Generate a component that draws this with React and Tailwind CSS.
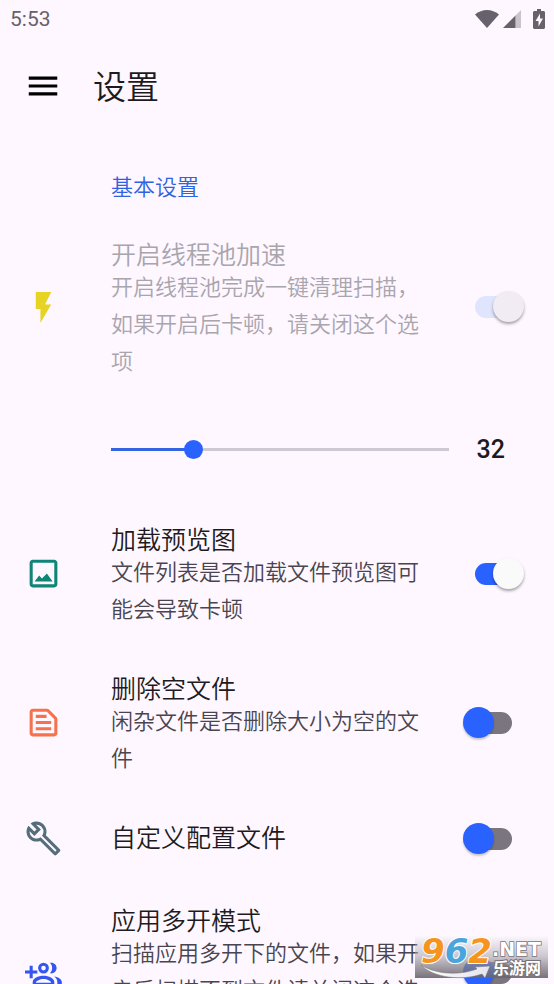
import { useState } from 'react';
import { MdMenu, MdFlashOn, MdOutlineTextSnippet, MdOutlineBuild } from 'react-icons/md';

function ImageIcon({ className }) {
  return (
    <svg viewBox="0 0 24 24" fill="currentColor" className={className} aria-hidden="true">
      <path d="M19 5v14H5V5h14m0-2H5c-1.100 0-2 .9-2 2v14c0 1.100.9 2 2 2h14c1.100 0 2-.9 2-2V5c0-1.100-.9-2-2-2z" />
      <path d="M6.200 17.200 9.200 13.300 11 15.200 14.200 12 17.900 17.200z" />
    </svg>
  );
}

function GroupAddIcon({ className }) {
  return (
    <svg viewBox="0 0 24 24" className={className} aria-hidden="true">
      <path fill="currentColor" d="M8 10H5V7H3v3H0v2h3v3h2v-3h3z" />
      <circle cx="12" cy="8.500" r="2.500" fill="none" stroke="currentColor" strokeWidth="2" />
      <path fill="currentColor" d="M16.200 5.100c2.500-.4 4.300 1.300 4.300 3.400s-1.800 3.800-4.300 3.400c1.900-2 1.900-4.800 0-6.800z" />
      <path fill="currentColor" fillRule="evenodd" d="M12 13.500c-3.500 0-7 1.600-7 4.200V20h14v-2.300c0-2.600-3.500-4.200-7-4.200zM7 18c.3-1.200 2.700-2.400 5-2.400s4.700 1.200 5 2.400z" />
      <path fill="currentColor" d="M19 14c2.700.5 4.900 1.800 4.900 3.700V20H21v-2.300c0-1.500-.8-2.800-2-3.700z" />
    </svg>
  );
}

function Switch({ id, defaultChecked, disabled }) {
  return (
    <input
      id={id}
      type="checkbox"
      role="switch"
      defaultChecked={defaultChecked}
      disabled={disabled}
      className="relative h-8 w-[62px] shrink-0 appearance-none before:absolute before:left-3 before:top-[5px] before:h-[22px] before:w-[37px] before:rounded-full before:bg-[#7a757f] after:absolute after:left-0 after:top-0 after:size-[31px] after:rounded-full after:bg-[#2962ff] after:shadow-[0_2px_2px_rgba(0,0,0,0.2)] checked:before:bg-[#2962ff] checked:after:left-[30px] checked:after:bg-[#fafafa] checked:after:shadow-[0_2px_3px_rgba(0,0,0,0.35)] disabled:before:bg-[#e0e5fe] disabled:after:bg-[#f1ecf3]"
    />
  );
}

function SettingRow({ id, icon, title, summary, checked, disabled }) {
  return (
    <div className="flex items-center pl-[25px] pr-[29px]">
      {icon}
      <label htmlFor={id} className="ml-[49px] mr-6 min-w-0 flex-1 py-7 font-[350]">
        <span className={`block text-[25px] leading-[27px] ${disabled ? 'text-[#a9a5ad]' : 'text-[#1d1b20]'}`}>
          {title}
        </span>
        {summary && (
          <span className={`-mb-2 block text-[22px] leading-[37px] ${disabled ? 'text-[#a9a5ad]' : 'text-[#49454f]'}`}>
            {summary}
          </span>
        )}
      </label>
      <Switch id={id} defaultChecked={checked} disabled={disabled} />
    </div>
  );
}

const MIN = 1;
const MAX = 128;

function ThreadSlider() {
  const [value, setValue] = useState(32);
  const percent = ((value - MIN) / (MAX - MIN)) * 100;
  return (
    <div className="flex h-[99px] items-center pl-[111px] pr-[49px]">
      <div className="grid flex-1 items-center">
        <div className="col-start-1 row-start-1 h-[3px] bg-[#cdc8d1]">
          <div className="h-full bg-[#3365e2]" style={{ width: `${percent}%` }} />
        </div>
        <input
          type="range"
          aria-label="线程数"
          min={MIN}
          max={MAX}
          value={value}
          onChange={(e) => setValue(Number(e.target.value))}
          className="z-10 col-start-1 row-start-1 -mx-[9px] h-5 appearance-none bg-transparent [&::-webkit-slider-thumb]:size-[19px] [&::-webkit-slider-thumb]:appearance-none [&::-webkit-slider-thumb]:rounded-full [&::-webkit-slider-thumb]:bg-[#2962ff]"
        />
      </div>
      <output className="ml-7 text-[25px] font-medium leading-8 text-[#1d1b20]">{value}</output>
    </div>
  );
}

function StatusBar() {
  return (
    <div className="flex h-[38px] items-center justify-between pl-[10px] pr-[9px] text-[#66616a]">
      <span className="text-[21px] leading-6">5:53</span>
      <div className="flex items-center">
        <svg viewBox="0 0 24 18" className="h-[18px] w-6" fill="currentColor" aria-hidden="true">
          <path d="M0 4.500C7-1.500 17-1.500 24 4.500L12 18z" />
        </svg>
        <svg viewBox="0 0 18 18" className="ml-1 h-[18px] w-[18px]" fill="currentColor" aria-hidden="true">
          <path d="M18 0v18h-5.500V5.500z" opacity=".35" />
          <path d="M12.500 5.500V18H0z" />
        </svg>
        <svg viewBox="0 0 12 20" className="ml-3 h-5 w-3" fill="currentColor" aria-hidden="true">
          <path fillRule="evenodd" d="M4 0h4v2h3l1 1v16l-1 1H1l-1-1V3l1-1h3zM7 4.500 2.500 12H5.500v5.500L10 9.500H7z" />
        </svg>
      </div>
    </div>
  );
}

function Watermark() {
  return (
    <div className="pointer-events-none absolute bottom-[6px] right-[6px] h-[43px] w-[133px] bg-linear-to-b from-white/10 via-[#aaa6ad]/60 to-[#68646b]/90">
      <svg viewBox="0 0 133 43" className="h-full w-full overflow-visible" aria-hidden="true">
        <defs>
          <linearGradient id="swoosh" x1="0" x2="1">
            <stop offset="0" stopColor="#ffffff" />
            <stop offset="1" stopColor="#e4e4ec" />
          </linearGradient>
        </defs>
        <path d="M6 30c14 9 37 11 56 4l-2-2 15-1-5 12-3-4C48 46 18 43 6 30z" fill="url(#swoosh)" stroke="#77737a" strokeWidth=".5" />
        <text x="6" y="28" fill="#f7941d" stroke="#ffffff" strokeWidth="2" paintOrder="stroke" strokeLinejoin="round" className="font-['DejaVu_Sans'] text-[34px] font-bold italic">
          9<tspan fill="#4aa5dc">6</tspan>2
        </text>
        <text x="77" y="21" fill="#ffffff" stroke="#77737a" strokeWidth="1.500" paintOrder="stroke" className="font-['DejaVu_Sans'] text-[19px] font-bold">.NET</text>
        <text x="78" y="39" fill="#ffffff" stroke="#77737a" strokeWidth="2" paintOrder="stroke" className="font-['Noto_Sans_CJK_SC'] text-[16px] font-bold">乐游网</text>
      </svg>
    </div>
  );
}

export default function App() {
  return (
    <div className="relative flex h-screen flex-col overflow-hidden bg-[#fef7ff] font-[Roboto,'Noto_Sans_CJK_SC',sans-serif]">
      <StatusBar />
      <header className="flex h-24 shrink-0 items-center pl-6">
        <button type="button" aria-label="菜单" className="text-black">
          <MdMenu className="size-[38px]" />
        </button>
        <h1 className="ml-[31px] pt-1 text-[33px] font-[350] leading-10 text-[#1d1b20]">设置</h1>
      </header>
      <main className="min-h-0 flex-1 overflow-hidden">
        <h2 className="pl-[111px] pt-7 text-[22px] font-[350] leading-[52px] text-[#2f62e0]">基本设置</h2>
        <SettingRow
          id="thread-pool"
          icon={<MdFlashOn className="size-[37px] shrink-0 text-[#e6d324]" />}
          title="开启线程池加速"
          summary="开启线程池完成一键清理扫描，如果开启后卡顿，请关闭这个选项"
          checked
          disabled
        />
        <ThreadSlider />
        <SettingRow
          id="preview"
          icon={<ImageIcon className="size-[37px] shrink-0 text-[#0f8577]" />}
          title="加载预览图"
          summary="文件列表是否加载文件预览图可能会导致卡顿"
          checked
        />
        <SettingRow
          id="empty-files"
          icon={<MdOutlineTextSnippet className="size-[37px] shrink-0 text-[#f4734d]" />}
          title="删除空文件"
          summary="闲杂文件是否删除大小为空的文件"
        />
        <SettingRow
          id="custom-config"
          icon={<MdOutlineBuild className="size-[37px] shrink-0 text-[#546e7a]" />}
          title="自定义配置文件"
        />
        <SettingRow
          id="multi-app"
          icon={<GroupAddIcon className="size-[37px] shrink-0 text-[#3355f0]" />}
          title="应用多开模式"
          summary="扫描应用多开下的文件，如果开启后扫描不到文件请关闭这个选项"
        />
      </main>
      <Watermark />
    </div>
  );
}
